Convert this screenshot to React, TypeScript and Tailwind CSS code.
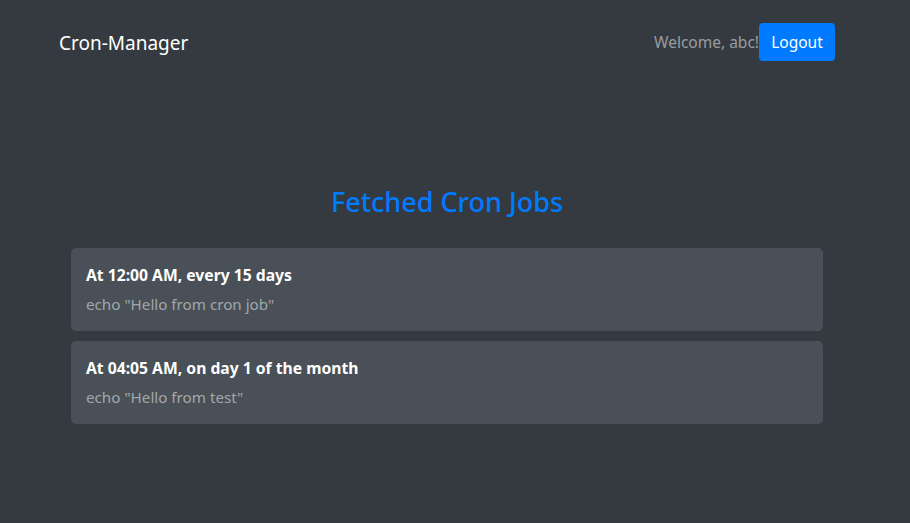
const JOBS = [
  { id: 1, schedule: "At 12:00 AM, every 15 days", command: 'echo "Hello from cron job"' },
  { id: 2, schedule: "At 04:05 AM, on day 1 of the month", command: 'echo "Hello from test"' },
]

export default function App() {
  return (
    <div className="min-h-screen w-full bg-[#343a40] font-['Noto_Sans',sans-serif] text-white">
      {/* top bar */}
      <nav className="flex h-[84px] items-center justify-between pl-[59px] pr-[75px]">
        <span className="pt-[2px] text-[19px] leading-[30px]">Cron-Manager</span>
        <div className="flex items-center">
          <span className="pt-[2px] text-[15.5px] text-[#9a9da0]">Welcome, abc!</span>
          <button className="h-[38px] w-[76px] rounded-[4px] bg-[#007bff] pt-[1px] text-[15.5px] text-white">
            Logout
          </button>
        </div>
      </nav>

      <main className="pl-[71px] pr-[87px] pt-[101px]">
        <h3 className="mb-[29px] text-center text-[27px] font-medium leading-[34px] text-[#007bff]">
          Fetched Cron Jobs
        </h3>
        <div className="flex flex-col gap-[10px]">
          {JOBS.map((job) => (
            <div key={job.id} className="rounded-[5px] bg-[#495057] px-[15px] pb-[15px] pt-[15px]">
              <h5 className="mb-[5px] text-[15.7px] font-bold leading-[24px]">{job.schedule}</h5>
              <p className="text-[15.2px] leading-[24px] text-[#a3a7ab]">{job.command}</p>
            </div>
          ))}
        </div>
      </main>
    </div>
  )
}
